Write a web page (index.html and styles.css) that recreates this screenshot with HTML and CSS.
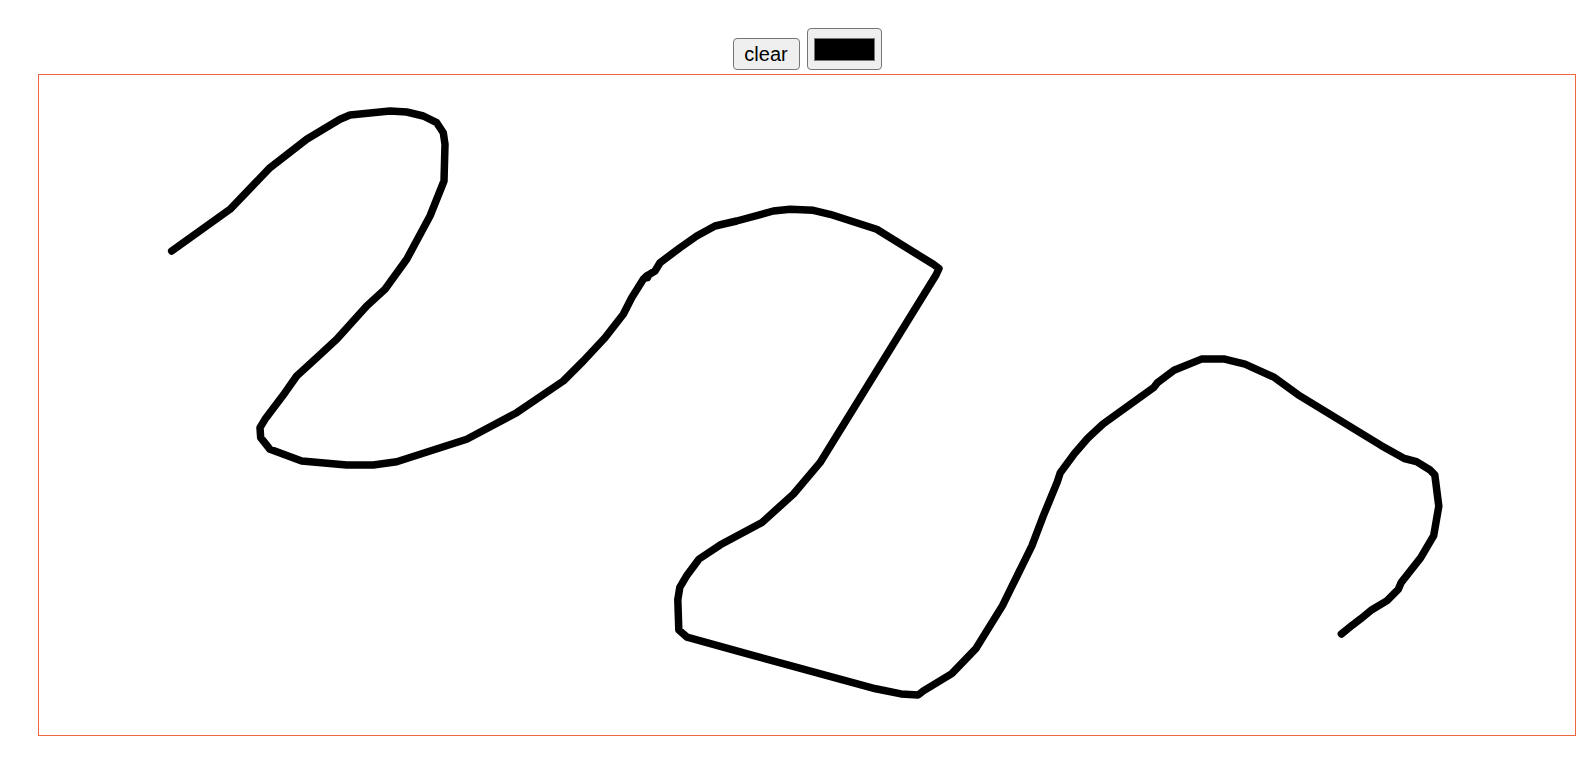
FILE: index.html
```html
<!DOCTYPE html>
<html lang="en">
<head>
<meta charset="utf-8">
<title>Sketch</title>
<link rel="stylesheet" href="styles.css">
</head>
<body>
<div class="wrap">
  <div class="toolbar">
    <button class="btn-clear" type="button">clear</button>
    <button class="btn-color" type="button" aria-label="color"><span class="swatch"></span></button>
  </div>
  <div class="board">
    <svg class="drawing" width="1536" height="660" viewBox="39 74 1536 660" xmlns="http://www.w3.org/2000/svg">
      <polyline class="stroke" points="171.7,250 230,208.3 270,166.7 306.7,138.3 323.3,128.3 340,118.3 350,114 390,110 406.7,111 423.3,115 436.7,121.7 443.3,131.7 445,143.3 444,180 430,215 406.7,258.3 385,288.3 366.7,305 336.7,338.3 316.7,356.7 296.7,375 285,391.7 265,418.3 260,426.7 260.7,436.7 270,448.3 301.7,460 346.7,464 373.3,464 396.7,460.7 466.7,438.3 516.7,411.7 563.3,380 583.3,360 605,336.7 623.3,313.3 631.7,296.7 643.3,278.3 646.7,275 655,270 660,261.7 680,246.7 696.7,235 715,225 736.7,220 773.3,210 790,208.3 813.3,209.3 830,213.3 876.7,228.3 933.3,263.3 939,267.5 936,274 820,461.7 793.5,493 762,521.5 720.4,543.8 699.1,558 687,574.2 679.8,586.4 677.8,598.6 678.8,629 687,636.1 752.9,654.3 875.7,687.8 901,692.9 918.3,693.9 923.4,689.9 951.8,672.6 976.1,647.3 1002.5,604.6 1031.9,544.8 1043.1,515.4 1057.3,480.9 1060.3,471.7 1074.5,452.5 1087.7,437.3 1103,423 1153.7,386.5 1157.7,381.4 1174,369.3 1201.4,358.1 1224.7,358.1 1245,363.2 1274.4,376.4 1297.8,393.6 1381,444.4 1404.3,457.5 1416.5,460.6 1429.7,468.7 1434.8,473.8 1438.8,505.2 1433.7,534.6 1420.6,556.9 1401.3,581.3 1398.2,588.4 1387.1,599.6 1371.9,608.7 1360.7,617.8 1352.6,623.9 1341.4,633"/>
      <circle class="blob" cx="647" cy="276" r="4.5"/>
    </svg>
  </div>
</div>
</body>
</html>
```

FILE: styles.css
```css
html, body {
  margin: 0;
  padding: 0;
  background: #ffffff;
}

.wrap {
  width: 1538px;
  padding: 28px 0 0 38px;
}

.toolbar {
  display: flex;
  justify-content: center;
  align-items: flex-end;
  gap: 7px;
  margin-bottom: 4px;
}

.btn-clear {
  box-sizing: border-box;
  width: 67px;
  height: 32px;
  margin: 0;
  padding: 0 0 1px 0;
  border: 1px solid #767676;
  border-radius: 4px;
  background: #efefef;
  color: #000000;
  font-family: "Liberation Sans", Arial, sans-serif;
  font-size: 20px;
  line-height: 28px;
}

.btn-color {
  box-sizing: border-box;
  width: 75px;
  height: 42px;
  margin: 0;
  padding: 0;
  border: 1px solid #767676;
  border-radius: 4px;
  background: #efefef;
  display: flex;
  align-items: center;
  justify-content: center;
}

.swatch {
  display: block;
  box-sizing: border-box;
  width: 61px;
  height: 23px;
  background: #000000;
  border: 1px solid #777777;
}

.board {
  width: 1536px;
  height: 660px;
  border: 1px solid #f0643f;
  background: #ffffff;
}

.drawing {
  display: block;
}

.stroke {
  fill: none;
  stroke: #000000;
  stroke-width: 7.5;
  stroke-linecap: round;
  stroke-linejoin: round;
}

.blob {
  fill: #000000;
}
```
